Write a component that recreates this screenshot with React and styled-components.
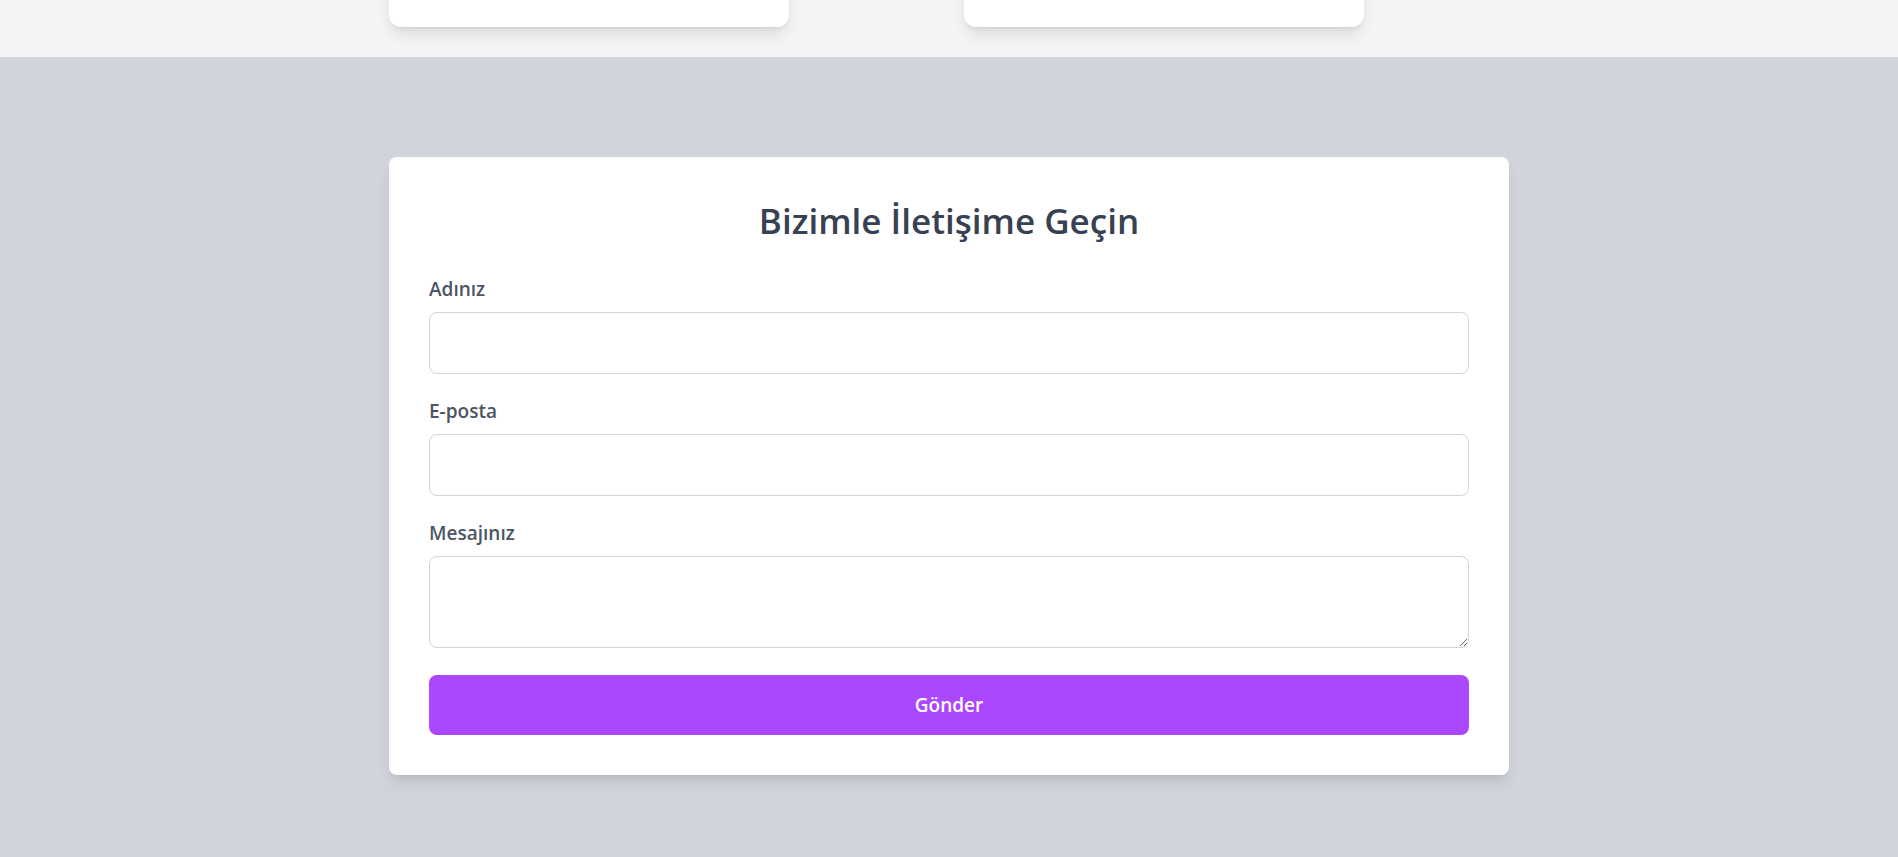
import styled, { createGlobalStyle } from "styled-components";

const GlobalStyle = createGlobalStyle`
  body {
    margin: 0;
    font-family: "Open Sans", "Noto Sans", sans-serif;
    background: #d1d5db;
  }
  * {
    box-sizing: border-box;
  }
`;

export default function App() {
  return (
    <>
      <GlobalStyle />
      <StyledTopStrip>
        <StyledCardRow>
          <StyledFeatureCard />
          <StyledFeatureCard />
        </StyledCardRow>
      </StyledTopStrip>
      <StyledContactSection>
        <StyledFormCard onSubmit={(e) => e.preventDefault()}>
          <StyledTitle>Bizimle İletişime Geçin</StyledTitle>
          <StyledField>
            <StyledLabel htmlFor="name">Adınız</StyledLabel>
            <StyledInput id="name" type="text" />
          </StyledField>
          <StyledField>
            <StyledLabel htmlFor="email">E-posta</StyledLabel>
            <StyledInput id="email" type="email" />
          </StyledField>
          <StyledField $last>
            <StyledLabel htmlFor="message">Mesajınız</StyledLabel>
            <StyledTextarea id="message" />
          </StyledField>
          <StyledSubmitButton type="submit">Gönder</StyledSubmitButton>
        </StyledFormCard>
      </StyledContactSection>
    </>
  );
}

const StyledTopStrip = styled.section`
  height: 57px;
  overflow: hidden;
  background: #f3f4f6;
  display: flex;
  align-items: flex-end;
  padding-bottom: 30px;
`;

const StyledCardRow = styled.div`
  width: 1120px;
  margin: 0 auto;
  display: flex;
  gap: 175px;
`;

const StyledFeatureCard = styled.div`
  width: 400px;
  height: 200px;
  flex-shrink: 0;
  background: #ffffff;
  border-radius: 12px;
  box-shadow: 0 10px 15px -3px rgba(0, 0, 0, 0.1),
    0 4px 6px -4px rgba(0, 0, 0, 0.1);
`;

const StyledContactSection = styled.section`
  background: #d1d5db;
  padding: 100px 16px 82px;
`;

const StyledFormCard = styled.form`
  max-width: 1120px;
  margin: 0 auto;
  background: #ffffff;
  border-radius: 8px;
  padding: 40px;
  box-shadow: 0 10px 15px -3px rgba(0, 0, 0, 0.1),
    0 4px 6px -4px rgba(0, 0, 0, 0.1);
`;

const StyledTitle = styled.h2`
  margin: 4px 0 34px;
  font-size: 35px;
  line-height: 40px;
  font-weight: 600;
  color: #374151;
  text-align: center;
`;

const StyledField = styled.div`
  margin-bottom: ${(p) => (p.$last ? "27px" : "23px")};
`;

const StyledLabel = styled.label`
  display: block;
  margin-bottom: 9px;
  font-size: 19px;
  line-height: 28px;
  font-weight: 600;
  color: #4b5563;
`;

const StyledInput = styled.input`
  display: block;
  width: 100%;
  height: 62px;
  padding: 16px;
  border: 1px solid #d1d5db;
  border-radius: 8px;
  font: inherit;
  font-size: 18px;
  color: #374151;
  outline: none;
`;

const StyledTextarea = styled.textarea`
  display: block;
  width: 100%;
  height: 92px;
  padding: 16px;
  border: 1px solid #d1d5db;
  border-radius: 8px;
  font: inherit;
  font-size: 18px;
  color: #374151;
  resize: vertical;
  outline: none;
`;

const StyledSubmitButton = styled.button`
  display: block;
  width: 100%;
  height: 60px;
  border: none;
  border-radius: 8px;
  background: #ab47fe;
  color: #ffffff;
  font-family: inherit;
  font-size: 19px;
  font-weight: 600;
  cursor: pointer;

  &:hover {
    background: #9f3cf2;
  }
`;
